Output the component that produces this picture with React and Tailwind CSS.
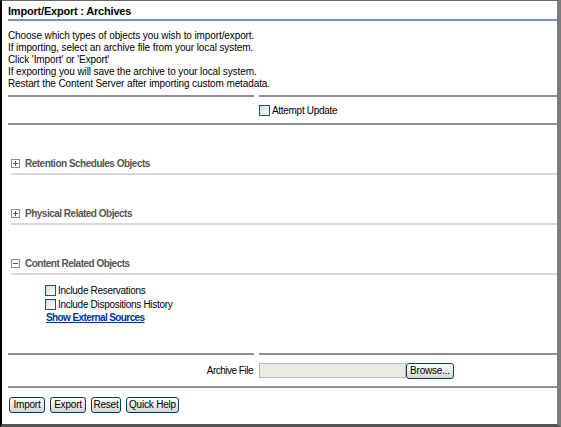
import React, { useState } from "react";

const font = { fontFamily: '"Liberation Sans", Arial, sans-serif' };

const Check = ({ checked, onChange }) => (
  <button
    type="button"
    onClick={onChange}
    className="w-[11px] h-[11px] border border-[#1c5180] bg-gradient-to-br from-[#dcdcd6] to-white flex items-center justify-center shrink-0"
  >
    {checked && <span className="text-[9px] leading-none text-[#21a121]">✓</span>}
  </button>
);

const XpButton = ({ children, className = "" }) => (
  <button
    type="button"
    className={`h-[16px] border border-[#003c74] rounded-[3px] bg-gradient-to-b from-white to-[#d6d6ce] text-[10px] leading-none text-black tracking-[-0.2px] flex items-center justify-center ${className}`}
  >
    {children}
  </button>
);

const Section = ({ title, open, onToggle, children }) => (
  <div className="pl-[9px]">
    <div className="flex items-center gap-[5px] h-[15px]">
      <button
        type="button"
        onClick={onToggle}
        className="w-[9px] h-[9px] border border-[#8c8c8c] bg-white flex items-center justify-center relative"
      >
        <span className="absolute w-[5px] h-px bg-[#555]" />
        {!open && <span className="absolute w-px h-[5px] bg-[#555]" />}
      </button>
      <span className="text-[10px] font-bold text-[#555] tracking-[-0.5px]">{title}</span>
    </div>
    <div className="mt-[2px] border-t-2 border-[#d8d8d4]" />
    {open && children}
  </div>
);

export default function App() {
  const [attempt, setAttempt] = useState(false);
  const [reservations, setReservations] = useState(false);
  const [dispositions, setDispositions] = useState(false);
  const [open, setOpen] = useState({ retention: false, physical: false, content: true });

  const toggle = (k) => setOpen((o) => ({ ...o, [k]: !o[k] }));

  return (
    <div
      style={font}
      className="w-[561px] h-[427px] bg-white border-l-2 border-l-black border-t border-t-[#666] border-r-4 border-r-[#7c7c7c] border-b-[3px] border-b-[#555] flex flex-col text-[10px] text-black overflow-hidden"
    >
      {/* TITLE */}
      <div className="pl-[6px] pt-[3px]">
        <div className="text-[11px] font-bold leading-[15px] tracking-[-0.2px]">Import/Export : Archives</div>
        <div className="border-t-2 border-[#7094c4]" />
      </div>

      {/* INSTRUCTIONS */}
      <div className="px-[6px] pt-[9px] leading-[12px] tracking-[-0.1px]">
        <div>Choose which types of objects you wish to import/export.</div>
        <div>If importing, select an archive file from your local system.</div>
        <div>Click 'Import' or 'Export'</div>
        <div>If exporting you will save the archive to your local system.</div>
        <div>Restart the Content Server after importing custom metadata.</div>
      </div>

      {/* ATTEMPT UPDATE */}
      <div className="mt-[5px] flex pl-[6px]">
        <div className="w-[246px] border-t-2 border-[#909090]" />
        <div className="flex-1 ml-[5px] border-t-2 border-[#909090]" />
      </div>
      <div className="flex pl-[6px] h-[26px] items-center">
        <div className="w-[251px]" />
        <label className="flex items-center gap-[2px] cursor-pointer tracking-[-0.3px]">
          <Check checked={attempt} onChange={() => setAttempt(!attempt)} />
          <span>Attempt Update</span>
        </label>
      </div>
      <div className="pl-[6px]">
        <div className="border-t-2 border-[#909090]" />
      </div>

      {/* SECTIONS */}
      <div className="pt-[31px] flex flex-col gap-[31px]">
        <Section title="Retention Schedules Objects" open={open.retention} onToggle={() => toggle("retention")} />
        <Section title="Physical Related Objects" open={open.physical} onToggle={() => toggle("physical")} />
        <Section title="Content Related Objects" open={open.content} onToggle={() => toggle("content")}>
          <div className="pl-[34px] pt-[8px] flex flex-col">
            <label className="flex items-center gap-[2px] h-[14px] cursor-pointer tracking-[-0.3px]">
              <Check checked={reservations} onChange={() => setReservations(!reservations)} />
              <span>Include Reservations</span>
            </label>
            <label className="flex items-center gap-[2px] h-[14px] cursor-pointer tracking-[-0.3px]">
              <Check checked={dispositions} onChange={() => setDispositions(!dispositions)} />
              <span>Include Dispositions History</span>
            </label>
            <a href="#" className="pl-[1px] h-[14px] leading-[14px] text-[#003399] font-bold underline tracking-[-0.6px]">
              Show External Sources
            </a>
          </div>
        </Section>
      </div>

      {/* ARCHIVE FILE */}
      <div className="mt-[28px] flex pl-[6px]">
        <div className="w-[246px] border-t-2 border-[#909090]" />
        <div className="flex-1 ml-[5px] border-t-2 border-[#909090]" />
      </div>
      <div className="flex pl-[6px] h-[31px] items-center">
        <div className="w-[246px] text-right pr-[1px] tracking-[-0.5px]">Archive File</div>
        <div className="ml-[5px] flex items-center">
          <input
            disabled
            className="w-[147px] h-[15px] bg-[#ebeae3] border border-[#b8b8b0]"
          />
          <XpButton className="w-[48px]">Browse...</XpButton>
        </div>
      </div>
      <div className="pl-[6px]">
        <div className="border-t-2 border-[#909090]" />
      </div>

      {/* ACTIONS */}
      <div className="px-[7px] pt-[9px] flex gap-[5px]">
        <XpButton className="w-[36px]">Import</XpButton>
        <XpButton className="w-[36px]">Export</XpButton>
        <XpButton className="w-[30px]">Reset</XpButton>
        <XpButton className="w-[53px]">Quick Help</XpButton>
      </div>
    </div>
  );
}
